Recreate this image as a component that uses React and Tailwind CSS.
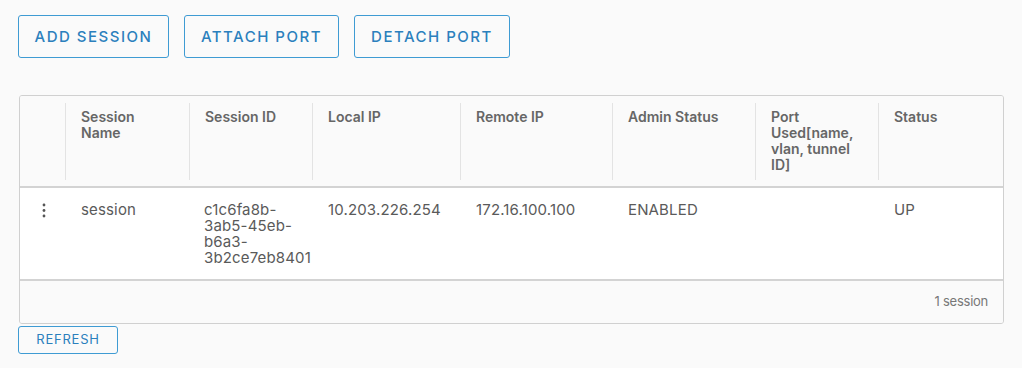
import React from "react";

const columns = [
    "",
    "Session Name",
    "Session ID",
    "Local IP",
    "Remote IP",
    "Admin Status",
    "Port Used[name, vlan, tunnel ID]",
    "Status",
];

const rows = [
    {
        name: "session",
        id: ["c1c6fa8b-", "3ab5-45eb-", "b6a3-", "3b2ce7eb8401"],
        localIp: "10.203.226.254",
        remoteIp: "172.16.100.100",
        admin: "ENABLED",
        port: "",
        status: "UP",
    },
];

const gridCols = "grid grid-cols-[45px_124px_123px_148px_152px_143px_123px_1fr]";

const OutlineButton = ({ children, className }) => (
    <button
        className={`border border-[#3f9bd3] rounded-[3px] text-[#2b80bd] uppercase bg-transparent ${className}`}
    >
        {children}
    </button>
);

const App = () => {
    return (
        <div
            className="min-h-[368px] bg-[#fafafa] pl-[18px] pt-[15px] pr-[18px]"
            style={{ fontFamily: "Inter, 'Open Sans', sans-serif" }}
        >
            <div className="flex gap-[15px]">
                <OutlineButton className="w-[151px] h-[43px] pt-px text-[15px] font-medium tracking-[0.1em]">Add Session</OutlineButton>
                <OutlineButton className="w-[155px] h-[43px] pt-px text-[15px] font-medium tracking-[0.1em]">Attach Port</OutlineButton>
                <OutlineButton className="w-[156px] h-[43px] pt-px text-[15px] font-medium tracking-[0.1em]">Detach Port</OutlineButton>
            </div>

            <div className="mt-[37px] ml-px w-[985px] border border-[#d0d0d0] rounded-[3px] overflow-hidden">
                {/* header */}
                <div className={`${gridCols} h-[92px] bg-[#fafafa] border-b-2 border-[#d3d3d3]`}>
                    {columns.map((col, i) => (
                        <div key={i} className="pt-[7px] pb-[6px]">
                            <div
                                className={`h-full pt-[6px] pl-[15px] pr-[12px] text-[14px] leading-[16px] font-semibold text-[#666] ${
                                    i > 0 ? "border-l border-[#e3e3e3]" : ""
                                }`}
                            >
                                {col}
                            </div>
                        </div>
                    ))}
                </div>

                {/* body */}
                {rows.map((r, i) => (
                    <div key={i} className={`${gridCols} h-[93px] bg-white border-b-2 border-[#d3d3d3] text-[15px] leading-[16px] tracking-[0.01em] text-[#5a5a5a]`}>
                        <div className="flex justify-center pt-[15px] pl-[3px]">
                            <svg width="4" height="15" viewBox="0 0 4 15">
                                <circle cx="2" cy="2" r="1.4" fill="#555" />
                                <circle cx="2" cy="7.5" r="1.4" fill="#555" />
                                <circle cx="2" cy="13" r="1.4" fill="#555" />
                            </svg>
                        </div>
                        <div className="pt-[14px] pl-[16px]">{r.name}</div>
                        <div className="pt-[14px] pl-[15px] whitespace-nowrap">
                            {r.id.map((part, j) => (
                                <div key={j}>{part}</div>
                            ))}
                        </div>
                        <div className="pt-[14px] pl-[16px]">{r.localIp}</div>
                        <div className="pt-[14px] pl-[16px]">{r.remoteIp}</div>
                        <div className="pt-[14px] pl-[16px]">{r.admin}</div>
                        <div className="pt-[14px] pl-[16px]">{r.port}</div>
                        <div className="pt-[14px] pl-[16px]">{r.status}</div>
                    </div>
                ))}

                {/* footer */}
                <div className="h-[42px] bg-[#fafafa] flex items-center justify-end pr-[15px] text-[13px] text-[#777] tracking-[-0.02em]">
                    1 session
                </div>
            </div>

            <div className="mt-[2px]">
                <OutlineButton className="w-[100px] h-[28px] text-[13px] tracking-[0.06em]">Refresh</OutlineButton>
            </div>
        </div>
    );
};

export default App;
